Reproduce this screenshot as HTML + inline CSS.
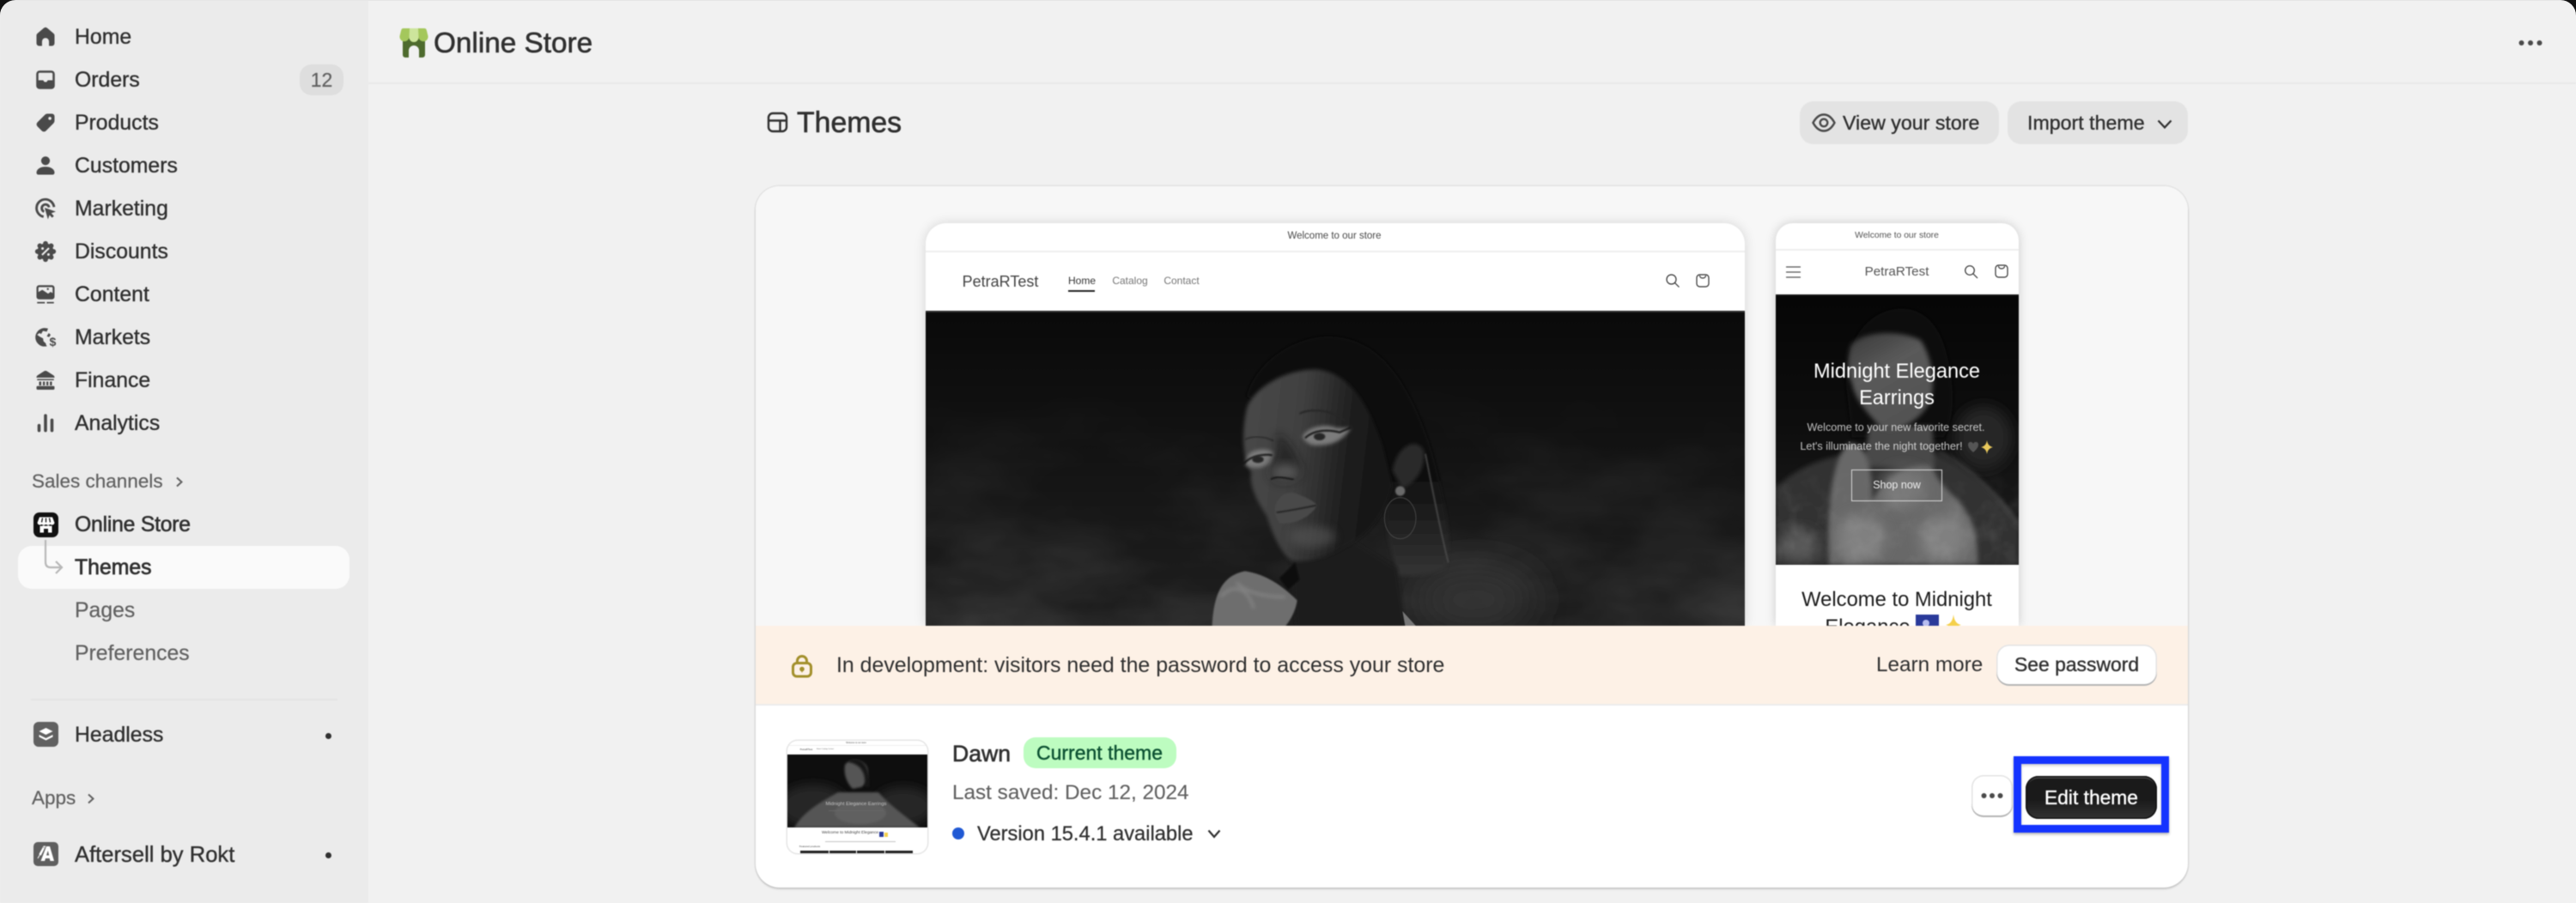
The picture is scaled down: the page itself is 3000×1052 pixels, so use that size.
<!DOCTYPE html>
<html><head><meta charset="utf-8"><title>Online Store - Themes</title>
<style>
html,body{margin:0;padding:0;width:3000px;height:1052px;overflow:hidden;background:#111}
*{box-sizing:border-box}
#root{position:absolute;left:0;top:0;width:3000px;height:1052px;background:#f1f1f1;border-radius:18px 18px 0 0;overflow:hidden;font-family:"Liberation Sans",sans-serif;color:#303030;border-top:1px solid #e6e6e6}
#in{position:absolute;left:0;top:-1px;width:3000px;height:1052px;filter:blur(.4px)}
.a{position:absolute}
.t{position:absolute;white-space:nowrap;line-height:40px;height:40px;margin-top:1px}
.n{font-size:24.8px;-webkit-text-stroke:.35px #303030;left:87px}
.g{color:#616161;-webkit-text-stroke:.2px #616161}
.m{-webkit-text-stroke:.6px currentColor}
svg{position:absolute;display:block;overflow:visible}
.ic{width:30px;height:30px;left:38px;fill:#4a4a4a}
.p{position:absolute;white-space:nowrap;line-height:1;text-align:center;transform:translateX(-50%)}
</style></head><body>
<div id="root"><div id="in">

<!-- sidebar -->
<div class="a" style="left:0;top:0;width:429px;height:1052px;background:#ebebeb"></div>

<svg class="ic" style="top:28px" viewBox="0 0 20 20"><path d="M3 8.8c0-.6.3-1.1.7-1.500L8.600 3.200a2.200 2.200 0 0 1 2.800 0l4.900 4.100c.4.4.7.900.7 1.500V15a2 2 0 0 1-2 2h-2.300v-3.500a2.700 2.700 0 0 0-5.400 0V17H5a2 2 0 0 1-2-2z"/></svg>
<svg class="ic" style="top:78px" viewBox="0 0 20 20"><path fill-rule="evenodd" d="M5.500 2.800h9A2.700 2.700 0 0 1 17.200 5.500v9a2.700 2.700 0 0 1-2.700 2.700h-9a2.700 2.700 0 0 1-2.700-2.700v-9A2.700 2.700 0 0 1 5.500 2.800zM4.500 5.500v4.800h3.300c.4 0 .6.200.8.500l.5.900h1.800l.5-.9c.2-.3.400-.5.800-.5h3.300V5.500a1 1 0 0 0-1-1h-9a1 1 0 0 0-1 1z"/></svg>
<svg class="ic" style="top:128px" viewBox="0 0 20 20"><path fill-rule="evenodd" d="M11.500 3h3.500A2 2 0 0 1 17 5v3.500a2.500 2.500 0 0 1-.7 1.800l-6 6a2.200 2.200 0 0 1-3.100 0l-3.500-3.500a2.200 2.200 0 0 1 0-3.100l6-6A2.500 2.500 0 0 1 11.500 3zM13.400 5.400a1.200 1.200 0 1 0 0 2.400 1.200 1.200 0 0 0 0-2.400z"/></svg>
<svg class="ic" style="top:178px" viewBox="0 0 20 20"><circle cx="10" cy="6.200" r="3.400"/><path d="M3 15.500c0-2.800 2.800-4.700 7-4.700s7 1.900 7 4.700c0 .9-.6 1.500-1.500 1.500h-11c-.9 0-1.500-.6-1.500-1.500z"/></svg>
<svg class="ic" style="top:228px" viewBox="0 0 20 20"><path d="M8.500 16.300A6.800 6.800 0 1 1 16.600 8.800" fill="none" stroke="#4a4a4a" stroke-width="1.900"/><path d="M8.900 12.400A2.900 2.900 0 1 1 12.800 9" fill="none" stroke="#4a4a4a" stroke-width="1.900"/><path d="M9.300 9.300l8.700 3-3.500 1.300 2 2.200-1.400 1.300-2-2.100-1.200 3.300z"/></svg>
<svg class="ic" style="top:278px" viewBox="0 0 20 20"><g><circle cx="10" cy="10" r="6.300"/><circle cx="10" cy="3.800" r="1.900"/><circle cx="10" cy="16.200" r="1.900"/><circle cx="3.800" cy="10" r="1.900"/><circle cx="16.200" cy="10" r="1.900"/><circle cx="5.600" cy="5.600" r="1.900"/><circle cx="14.400" cy="5.600" r="1.900"/><circle cx="5.600" cy="14.400" r="1.900"/><circle cx="14.400" cy="14.400" r="1.900"/></g><path d="M7.300 12.700l5.400-5.400" stroke="#ebebeb" stroke-width="1.400"/><circle cx="7.700" cy="7.700" r="1" fill="#ebebeb"/><circle cx="12.300" cy="12.300" r="1" fill="#ebebeb"/></svg>
<svg class="ic" style="top:328px" viewBox="0 0 20 20"><path fill-rule="evenodd" d="M5 2.800h10a2 2 0 0 1 2 2v7a2 2 0 0 1-2 2H5a2 2 0 0 1-2-2v-7a2 2 0 0 1 2-2zM4.500 5v3.200l3-1.800 4.500 3 2-1.400 1.500 1V5a.7.7 0 0 0-.7-.7H5.200A.7.7 0 0 0 4.500 5z"/><path d="M3.500 15.800h6v1.200h-6zM11 15.800h5.500v1.200H11z"/><circle cx="11.800" cy="5.800" r=".8"/></svg>
<svg class="ic" style="top:378px" viewBox="0 0 20 20"><path d="M9.700 2.800a7.200 7.200 0 0 0-1.500 14.300l3-.1c-.6-.7-.9-1.400-.9-2.200l-1.900-1.800-.3-2.200-2.800-1.500L3.500 8l1.800-1.300 1.300.7L8 5l3 .6L12 3.200a7 7 0 0 0-2.300-.4z"/><path d="M12.500 6.700l1.500 1.300-1.200 1.800-1.800-.6z"/><text x="13" y="16.800" font-family="Liberation Sans,sans-serif" font-size="9.400" font-weight="700" fill="#4a4a4a">$</text></svg>
<svg class="ic" style="top:428px" viewBox="0 0 20 20"><path d="M10 2.700c.5 0 .9.100 1.300.4l4.600 2.900c.7.400 1.100 1 1.100 1.800V8H3v-.2c0-.8.400-1.400 1.100-1.800l4.600-2.900c.4-.3.800-.4 1.300-.4z"/><path d="M3.500 9h13v1h-13zM5 11h1.700v3H5zM8 11h1.500v3H8zM10.700 11h1.500v3h-1.500zM13.400 11h1.600v3h-1.600z"/><rect x="3" y="14.500" width="14" height="2.800" rx=".8"/></svg>
<svg class="ic" style="top:478px" viewBox="0 0 20 20"><rect x="3.800" y="10.600" width="2.400" height="6.300" rx="1.200"/><rect x="8.800" y="2.900" width="2.400" height="14" rx="1.200"/><rect x="13.800" y="6.400" width="2.400" height="10.500" rx="1.200"/></svg>

<span class="t n" style="top:23px">Home</span>
<span class="t n" style="top:73px">Orders</span>
<span class="t n" style="top:123px">Products</span>
<span class="t n" style="top:173px">Customers</span>
<span class="t n" style="top:223px">Marketing</span>
<span class="t n" style="top:273px">Discounts</span>
<span class="t n" style="top:323px">Content</span>
<span class="t n" style="top:373px">Markets</span>
<span class="t n" style="top:423px">Finance</span>
<span class="t n" style="top:473px">Analytics</span>
<div class="a" style="left:349px;top:75px;width:51px;height:36px;background:#dedede;border-radius:14px"></div>
<span class="t g" style="left:349px;top:72px;width:51px;text-align:center;font-size:23px">12</span>

<span class="t g" style="left:37px;top:540px;font-size:22.500px">Sales channels</span>
<svg style="left:203px;top:554px;width:12px;height:15px" viewBox="0 0 12 15"><path d="M3 2.500l5.500 5-5.500 5" fill="none" stroke="#616161" stroke-width="2"/></svg>

<svg style="left:39px;top:597px;width:29px;height:29px" viewBox="0 0 29 29"><rect width="29" height="29" rx="7" fill="#111"/><path d="M7 5.500h15l2.500 6.500a3 3 0 0 1-5 1.700 3.500 3.500 0 0 1-5 0 3.500 3.500 0 0 1-5 0 3 3 0 0 1-5-1.700z" fill="#fff"/><path d="M7.500 15.500c1.500.6 2.800.4 4-.5 2 1 4 1 6 0 1.200.9 2.500 1.100 4 .5v8h-4.500v-4.500h-5v4.500H7.500z" fill="#fff"/><path d="M10.500 6.500l-1 5M14.500 6.500v5M18.500 6.500l1 5" stroke="#111" stroke-width="1.300"/></svg>
<span class="t n" style="top:591px;letter-spacing:-.25px;-webkit-text-stroke:.55px #303030">Online Store</span>

<div class="a" style="left:21px;top:636px;width:386px;height:50px;background:#fafafa;border-radius:16px"></div>
<svg style="left:48px;top:629px;width:28px;height:44px" viewBox="0 0 28 44"><path d="M5 0v26c0 4 2 6 6 6h12M17 25l7 7-7 7" fill="none" stroke="#b8b8b8" stroke-width="2.200"/></svg>
<span class="t n" style="top:641px;-webkit-text-stroke:.7px #303030">Themes</span>
<span class="t n g" style="top:691px;color:#616161">Pages</span>
<span class="t n g" style="top:741px;color:#616161">Preferences</span>
<div class="a" style="left:36px;top:814px;width:357px;height:2px;background:#e3e3e3"></div>

<svg style="left:39px;top:841px;width:29px;height:29px" viewBox="0 0 29 29"><rect width="29" height="29" rx="6" fill="#616161"/><path d="M14.500 7l8 4-8 4-8-4z" fill="#fff"/><path d="M6.500 15l8 4 8-4v2.500l-8 4-8-4z" fill="#fff"/></svg>
<span class="t n" style="top:836px">Headless</span>
<div class="a" style="left:379px;top:854px;width:7px;height:7px;border-radius:50%;background:#303030"></div>

<span class="t g" style="left:37px;top:909px;font-size:22.500px">Apps</span>
<svg style="left:100px;top:923px;width:12px;height:15px" viewBox="0 0 12 15"><path d="M3 2.500l5.500 5-5.500 5" fill="none" stroke="#616161" stroke-width="2"/></svg>

<svg style="left:39px;top:981px;width:29px;height:28px" viewBox="0 0 29 28"><rect width="29" height="28" rx="5" fill="#5f5f5f"/><path d="M15 5h4l5 17h-4.500l-.8-3H14l-.9 3H8.500zM15 15.500h3.200L16.800 10z" fill="#fff" fill-rule="evenodd"/><path d="M7 14l5-9h1.500l-5 10zM5 19l7-12" stroke="#fff" stroke-width="1"/></svg>
<span class="t n" style="top:975px;font-size:25.600px">Aftersell by Rokt</span>
<div class="a" style="left:379px;top:993px;width:7px;height:7px;border-radius:50%;background:#303030"></div>

<!-- top bar -->
<div class="a" style="left:429px;top:96px;width:2571px;height:2px;background:#e9e9e9"></div>
<svg style="left:465px;top:33px;width:34px;height:34px" viewBox="0 0 34 34"><path fill-rule="evenodd" d="M4 9h26v22a3 3 0 0 1-3 3h-4V26a6 6 0 0 0-12 0v8H7a3 3 0 0 1-3-3z" fill="#4e6b2e"/><path d="M4.500 0H29.500Q31.500 0 32 3L33.500 9a5.500 5.500 0 0 1-11 1.500a5.500 5.500 0 0 1-11 0a5.500 5.500 0 0 1-11-1.500L2 3Q2.500 0 4.500 0z" fill="#a4c75c"/><path d="M12 0H22L22.500 10.500a5.500 5.500 0 0 1-11 0z" fill="#cde59c"/></svg>
<span class="t m" style="left:505px;top:30px;font-size:33.300px">Online Store</span>
<svg style="left:2930px;top:44px;width:34px;height:12px" viewBox="0 0 34 12"><circle cx="6.500" cy="6" r="3" fill="#4a4a4a"/><circle cx="17" cy="6" r="3" fill="#4a4a4a"/><circle cx="27.500" cy="6" r="3" fill="#4a4a4a"/></svg>

<!-- page header -->
<svg style="left:893px;top:130px;width:25px;height:25px" viewBox="0 0 25 25"><rect x="2" y="2" width="21" height="21" rx="5" fill="none" stroke="#303030" stroke-width="2.400"/><path d="M2 10.500h21M15.500 10.500V23" fill="none" stroke="#303030" stroke-width="2.400"/></svg>
<span class="t m" style="left:928px;top:122px;font-size:33.800px">Themes</span>
<div class="a" style="left:2096px;top:118px;width:232px;height:50px;background:#e3e3e3;border-radius:16px"></div>
<svg style="left:2110px;top:131px;width:28px;height:24px" viewBox="0 0 28 24"><path d="M1.500 12C5 5.500 9 2.500 14 2.500S23 5.500 26.500 12C23 18.500 19 21.500 14 21.500S5 18.500 1.500 12z" fill="none" stroke="#4a4a4a" stroke-width="2.400"/><circle cx="14" cy="12" r="4.300" fill="none" stroke="#4a4a4a" stroke-width="2.400"/></svg>
<span class="t" style="left:2146px;top:122px;font-size:23.200px;-webkit-text-stroke:.35px #303030">View your store</span>
<div class="a" style="left:2338px;top:118px;width:210px;height:50px;background:#e3e3e3;border-radius:16px"></div>
<span class="t" style="left:2361px;top:122px;font-size:23.200px;-webkit-text-stroke:.35px #303030">Import theme</span>
<svg style="left:2512px;top:139px;width:18px;height:11px" viewBox="0 0 18 11"><path d="M1.500 1.500l7.500 8 7.500-8" fill="none" stroke="#303030" stroke-width="2.200"/></svg>

<!-- main card -->
<div class="a" style="left:880px;top:217px;width:1668px;height:817px;border-radius:28px;background:#fff;box-shadow:0 2px 2px rgba(0,0,0,.14),0 0 0 1.500px rgba(0,0,0,.06)"></div>
<div class="a" style="left:880px;top:217px;width:1668px;height:817px;border-radius:28px;overflow:hidden">
  <div class="a" style="left:0;top:0;width:1668px;height:512px;background:#f7f7f7"></div>
</div>

<!-- desktop preview -->
<div class="a" style="left:1078px;top:260px;width:954px;height:469px;background:#fff;border-radius:24px 24px 0 0;box-shadow:0 0 14px rgba(0,0,0,.14);overflow:hidden">
  <div class="a" style="left:0;top:32px;width:954px;height:2px;background:#eee"></div>
  <span class="p" style="left:476px;top:10px;font-size:11.500px;color:#4a4a4a">Welcome to our store</span>
  <span class="p" style="left:87px;top:59px;font-size:18px;color:#444">PetraRTest</span>
  <span class="p" style="left:182px;top:61px;font-size:12px;color:#333">Home</span>
  <div class="a" style="left:166px;top:78px;width:31px;height:1.500px;background:#222"></div>
  <span class="p" style="left:238px;top:61px;font-size:12px;color:#777">Catalog</span>
  <span class="p" style="left:298px;top:61px;font-size:12px;color:#777">Contact</span>
  <svg style="left:861px;top:58px;width:18px;height:18px" viewBox="0 0 18 18"><circle cx="7.500" cy="7.500" r="5.500" fill="none" stroke="#333" stroke-width="1.200"/><path d="M11.500 11.500l5 5" stroke="#333" stroke-width="1.200"/></svg>
  <svg style="left:896px;top:58px;width:18px;height:18px" viewBox="0 0 18 18"><rect x="2" y="2" width="14" height="14" rx="3.500" fill="none" stroke="#333" stroke-width="1.200"/><path d="M5.500 3c0 4 7 4 7 0" fill="none" stroke="#333" stroke-width="1.200"/></svg>
  <svg style="left:0;top:102px;width:954px;height:367px;overflow:hidden" viewBox="0 0 954 367" preserveAspectRatio="none">
    <defs>
      <linearGradient id="bg" x1="0" y1="0" x2="0" y2="1"><stop offset="0" stop-color="#0a0a0a"/><stop offset=".4" stop-color="#121212"/><stop offset="1" stop-color="#1f1f1f"/></linearGradient>
      <linearGradient id="fade" x1="0" y1="0" x2="0" y2="1"><stop offset=".2" stop-color="#000"/><stop offset="1" stop-color="#fff"/></linearGradient>
      <mask id="fm"><rect width="954" height="367" fill="url(#fade)"/></mask>
      <linearGradient id="face" x1="0" y1="0" x2="1" y2=".15"><stop offset="0" stop-color="#484848"/><stop offset=".4" stop-color="#414141"/><stop offset=".75" stop-color="#1e1e1e"/><stop offset="1" stop-color="#141414"/></linearGradient>
      <linearGradient id="hr" x1="0" y1="0" x2="0" y2="1"><stop offset="0" stop-color="#0b0b0b"/><stop offset=".6" stop-color="#111"/><stop offset="1" stop-color="#343434"/></linearGradient>
      <filter id="b1" x="-20%" y="-20%" width="140%" height="140%"><feGaussianBlur stdDeviation="2.500"/></filter>
      <filter id="b2" x="-20%" y="-20%" width="140%" height="140%"><feGaussianBlur stdDeviation="6"/></filter>
      <filter id="b6" x="-30%" y="-30%" width="160%" height="160%"><feGaussianBlur stdDeviation="16"/></filter>
      <filter id="b30" x="-50%" y="-50%" width="200%" height="200%"><feGaussianBlur stdDeviation="70"/></filter>
      <filter id="fog" x="0" y="0" width="100%" height="100%"><feTurbulence type="fractalNoise" baseFrequency=".006 .012" numOctaves="4" seed="7"/><feColorMatrix values="0 0 0 0 1  0 0 0 0 1  0 0 0 0 1  .55 0 0 0 -.18"/></filter>
    </defs>
    <rect width="954" height="367" fill="url(#bg)"/>
    <rect width="954" height="367" filter="url(#fog)" mask="url(#fm)" opacity=".42"/>
    <g transform="translate(262,0) scale(.33333)">
      <ellipse cx="1130" cy="1010" rx="210" ry="110" fill="#343434" filter="url(#b30)"/>
      <path d="M335 300C370 170 510 90 620 90C770 90 860 200 925 340C985 470 1010 590 1030 700C1050 790 1040 870 1030 900C980 925 920 930 865 925L830 800L800 500Z" fill="url(#hr)" filter="url(#b2)"/>
      <path d="M490 870L510 1105L890 1105L860 900L700 800Z" fill="#1c1c1c" filter="url(#b2)"/>
      <path d="M335 345C350 285 450 205 580 205C690 215 760 320 810 470L845 610C820 710 770 780 680 825C620 860 540 885 490 872C445 835 420 760 405 715C360 650 345 600 352 565C325 525 315 440 335 345Z" fill="url(#face)" filter="url(#b2)"/>
      <ellipse cx="565" cy="790" rx="80" ry="38" fill="#595959" filter="url(#b6)" opacity=".6"/>
      <path d="M530 440C550 400 620 395 650 410L700 410C680 440 650 470 590 470C560 475 540 460 530 440Z" fill="#7c7c7c" filter="url(#b2)"/>
      <path d="M340 505C360 480 410 480 430 495L420 530C400 550 360 555 330 540Z" fill="#7c7c7c" filter="url(#b2)"/>
      <path d="M540 445C570 415 620 415 660 425L700 408" fill="none" stroke="#111" stroke-width="6" filter="url(#b1)"/>
      <ellipse cx="590" cy="440" rx="20" ry="13" fill="#262626" filter="url(#b1)"/>
      <path d="M325 535C350 505 400 500 425 505" fill="none" stroke="#111" stroke-width="6" filter="url(#b1)"/>
      <ellipse cx="375" cy="520" rx="20" ry="12" fill="#262626" filter="url(#b1)"/>
      <path d="M520 360C560 340 630 345 680 385" fill="none" stroke="#262626" stroke-width="6" filter="url(#b1)"/>
      <path d="M330 450C360 435 400 440 430 455" fill="none" stroke="#2c2c2c" stroke-width="5" filter="url(#b1)"/>
      <path d="M440 455C445 500 430 530 410 560C415 590 440 610 480 600C510 600 530 580 530 560C520 510 470 430 440 430Z" fill="#161616" opacity=".6" filter="url(#b6)"/>
      <ellipse cx="470" cy="565" rx="50" ry="30" fill="#545454" filter="url(#b6)"/>
      <path d="M420 590C440 575 470 585 500 590" fill="none" stroke="#141414" stroke-width="6" filter="url(#b1)"/>
      <path d="M435 690C440 650 480 625 510 640C540 650 570 665 582 680C560 720 500 750 450 742C440 725 432 710 435 690Z" fill="#4a4a4a" filter="url(#b1)"/>
      <path d="M440 705C480 700 530 690 580 680" fill="none" stroke="#171717" stroke-width="4" filter="url(#b1)"/>
      <path d="M845 560C860 470 930 440 955 490C960 550 930 600 880 620Z" fill="#2c2c2c" filter="url(#b2)"/>
      <circle cx="872" cy="630" r="17" fill="#6a6a6a" filter="url(#b1)"/>
      <ellipse cx="872" cy="725" rx="55" ry="72" fill="none" stroke="#4c4c4c" stroke-width="2.500"/>
      <path d="M215 1105C220 990 250 925 330 910C400 920 460 960 512 1012C505 1060 480 1090 470 1105Z" fill="#6e6e6e" filter="url(#b1)"/>
      <path d="M245 1000C290 950 340 970 360 1040M300 950C340 990 410 1000 470 1000" fill="none" stroke="#8f8f8f" stroke-width="6" filter="url(#b2)"/>
      <path d="M450 935L505 880L520 940L480 975Z" fill="#0c0c0c" filter="url(#b1)"/>
      <path d="M880 1050L930 1105L890 1105Z" fill="#777"/>
      <path d="M960 500C980 600 1010 760 1040 880" fill="none" stroke="#4c4c4c" stroke-width="5" filter="url(#b1)"/>
    </g>
    <rect x="0" y="0" width="954" height="2" fill="#2f2f2f"/>
  </svg>
</div>

<!-- mobile preview -->
<div class="a" style="left:2068px;top:260px;width:283px;height:469px;background:#fff;border-radius:20px 20px 0 0;box-shadow:0 0 12px rgba(0,0,0,.18);overflow:hidden">
  <div class="a" style="left:0;top:30px;width:283px;height:2px;background:#eee"></div>
  <span class="p" style="left:141px;top:10px;font-size:10.300px;color:#555">Welcome to our store</span>
  <svg style="left:12px;top:50px;width:17px;height:14px" viewBox="0 0 17 14"><path d="M0 1h17M0 7h17M0 13h17" stroke="#555" stroke-width="1.300"/></svg>
  <span class="p" style="left:141px;top:49px;font-size:15.200px;color:#555">PetraRTest</span>
  <svg style="left:219px;top:48px;width:17px;height:17px" viewBox="0 0 17 17"><circle cx="7" cy="7" r="5.300" fill="none" stroke="#333" stroke-width="1.200"/><path d="M11 11l5 5" stroke="#333" stroke-width="1.200"/></svg>
  <svg style="left:255px;top:48px;width:16px;height:16px" viewBox="0 0 16 16"><rect x="1" y="1" width="14" height="14" rx="3.500" fill="none" stroke="#333" stroke-width="1.200"/><path d="M4.500 2c0 4 7 4 7 0" fill="none" stroke="#333" stroke-width="1.200"/></svg>
  <svg style="left:0;top:83px;width:283px;height:315px;overflow:hidden" viewBox="53 280 850 945" preserveAspectRatio="none">
    <defs>
      <linearGradient id="mf" x1="0" y1="0" x2=".5" y2="1"><stop offset="0" stop-color="#383838"/><stop offset=".45" stop-color="#5a5a5a"/><stop offset="1" stop-color="#525252"/></linearGradient>
      <linearGradient id="mb" x1="0" y1="0" x2="0" y2="1"><stop offset="0" stop-color="#060606"/><stop offset=".5" stop-color="#0e0e0e"/><stop offset="1" stop-color="#202020"/></linearGradient>
      <filter id="m3" x="-20%" y="-20%" width="140%" height="140%"><feGaussianBlur stdDeviation="8"/></filter>
      <filter id="m9" x="-40%" y="-40%" width="180%" height="180%"><feGaussianBlur stdDeviation="24"/></filter>
      <filter id="mn" x="0" y="0" width="100%" height="100%"><feTurbulence type="fractalNoise" baseFrequency=".014" numOctaves="3" seed="4"/><feColorMatrix values="0 0 0 0 1  0 0 0 0 1  0 0 0 0 1  1.300 0 0 0 -.55"/></filter>
      <linearGradient id="mfd" x1="0" y1="0" x2="0" y2="1"><stop offset=".6" stop-color="#000"/><stop offset=".8" stop-color="#fff"/></linearGradient>
      <mask id="mm"><rect x="53" y="280" width="850" height="945" fill="url(#mfd)"/></mask>
    </defs>
    <rect x="53" y="280" width="850" height="945" fill="url(#mb)"/>
    <ellipse cx="780" cy="780" rx="100" ry="110" fill="#262626" filter="url(#m9)"/>
    <path d="M300 600C290 430 390 325 500 330C610 335 650 450 665 560C680 660 670 730 640 780L320 780Z" fill="#101010" filter="url(#m3)"/>
    <path d="M53 960C120 880 250 840 340 835L600 835C700 860 850 1000 903 1080V1224H53Z" fill="#333" filter="url(#m3)"/>
    <path d="M380 740L600 740L610 880H360Z" fill="#484848" filter="url(#m3)"/>
    <path d="M315 460C345 410 480 400 560 440C600 500 615 600 590 660C550 730 470 770 420 745C380 700 330 650 320 590C300 560 305 500 315 460Z" fill="url(#mf)" filter="url(#m3)"/>
    <path d="M240 1224C230 1040 250 840 310 800C380 800 390 900 390 1000C460 890 560 860 600 880C640 1000 760 980 760 1224Z" fill="#686868" filter="url(#m3)"/>
    <ellipse cx="350" cy="1130" rx="85" ry="80" fill="#808080" filter="url(#m9)"/>
    <ellipse cx="640" cy="1130" rx="85" ry="80" fill="#808080" filter="url(#m9)"/>
    <ellipse cx="500" cy="960" rx="75" ry="70" fill="#787878" filter="url(#m9)"/>
    <ellipse cx="130" cy="1160" rx="70" ry="55" fill="#5a5a5a" filter="url(#m9)"/>
    <rect x="53" y="280" width="850" height="945" filter="url(#mn)" mask="url(#mm)" opacity=".14"/>
    <path d="M620 830C720 870 840 990 900 1080" fill="none" stroke="#6a6a6a" stroke-width="5" filter="url(#m3)"/>
    <rect x="53" y="280" width="850" height="5" fill="#1a1a1a"/>
  </svg>
  <span class="p" style="left:141px;top:161px;font-size:23.600px;color:#fff;line-height:24px">Midnight Elegance</span>
  <span class="p" style="left:141px;top:192px;font-size:23.600px;color:#fff;line-height:24px">Earrings</span>
  <span class="p" style="left:140px;top:232px;font-size:12.600px;color:rgba(255,255,255,.72)">Welcome to your new favorite secret.</span>
  <span class="p" style="left:123px;top:254px;font-size:12.700px;color:rgba(255,255,255,.72)">Let's illuminate the night together!</span>
  <svg style="left:220px;top:252px;width:46px;height:20px" viewBox="0 0 46 20"><path d="M4 6c0-4 5-4 6-1 1-3 6-3 6 1 0 4-4 7-6 9-2-2-6-5-6-9z" fill="#555"/><path d="M26 1c.8 5 3.200 7 7 8-3.800 1-6.200 3-7 8-.8-5-3.200-7-7-8 3.800-1 6.200-3 7-8z" fill="#e8c85c"/></svg>
  <div class="a" style="left:88px;top:287px;width:106px;height:37px;border:1.500px solid #d8d8d8"></div>
  <span class="p" style="left:141px;top:299px;font-size:12.500px;color:#eee">Shop now</span>
  <span class="p" style="left:141px;top:427px;font-size:23.800px;color:#1d1d1d;line-height:24px">Welcome to Midnight</span>
  <span class="p" style="left:107px;top:459px;font-size:23.800px;color:#1d1d1d;line-height:24px">Elegance</span>
  <svg style="left:163px;top:456px;width:56px;height:28px" viewBox="0 0 56 28"><rect x="0" y="0" width="27" height="28" fill="#2a3a9a"/><circle cx="12" cy="10" r="4" fill="#b7bdf0"/><path d="M44 0c1 8 4 11 9 12-5 1-8 4-9 16-1-12-4-15-9-16 5-1 8-4 9-12z" fill="#f5d04a"/></svg>
</div>

<!-- banner -->
<div class="a" style="left:880px;top:729px;width:1668px;height:93px;background:#fdf1e6;border-bottom:2px solid #ececec"></div>
<svg style="left:921px;top:763px;width:26px;height:27px" viewBox="0 0 26 27"><rect x="2.500" y="9.500" width="21" height="15.500" rx="4.500" fill="none" stroke="#a3902c" stroke-width="3"/><path d="M7.500 10V7a5.500 5.500 0 0 1 11 0v3" fill="none" stroke="#a3902c" stroke-width="3"/><circle cx="13" cy="16.500" r="2.800" fill="#a3902c"/><path d="M11.500 17h3l-1.500 4z" fill="#a3902c"/></svg>
<span class="t" style="left:974px;top:754px;font-size:24.900px">In development: visitors need the password to access your store</span>
<span class="t" style="left:2185px;top:754px;font-size:24.300px">Learn more</span>
<div class="a" style="left:2325px;top:751px;width:187px;height:48px;background:#fff;border-radius:15px;box-shadow:inset 0 -2px 0 #b5b5b5,inset 0 0 0 1.500px #e3e3e3"></div>
<span class="t" style="left:2346px;top:753px;font-size:22.900px;-webkit-text-stroke:.35px #303030">See password</span>

<!-- theme row -->
<div class="a" style="left:917px;top:863px;width:163px;height:131px;background:#fff;border-radius:12px;box-shadow:0 0 0 1.500px #e5e5e5;overflow:hidden">
  <div class="a" style="left:0;top:16px;width:163px;height:85px;background:#0e0e0e"></div>
  <svg style="left:0;top:16px;width:163px;height:85px;overflow:hidden" viewBox="0 0 163 85">
    <defs><filter id="th" x="-20%" y="-20%" width="140%" height="140%"><feGaussianBlur stdDeviation="1.200"/></filter><filter id="th2" x="-40%" y="-40%" width="180%" height="180%"><feGaussianBlur stdDeviation="6"/></filter></defs>
    <ellipse cx="30" cy="60" rx="40" ry="25" fill="#262626" filter="url(#th2)"/>
    <ellipse cx="135" cy="60" rx="35" ry="22" fill="#282828" filter="url(#th2)"/>
    <path d="M8 85C20 65 40 55 59 44L106 44C118 58 135 70 154 85Z" fill="#555" filter="url(#th)"/>
    <path d="M67 12C72 5 88 4 93 15C96 28 90 36 86 38L76 40C70 34 65 24 67 12Z" fill="#555" filter="url(#th)"/>
    <path d="M72 6C88 2 96 14 96 38L90 38C92 22 86 12 72 9Z" fill="#141414" filter="url(#th)"/>
    <ellipse cx="85" cy="68" rx="30" ry="13" fill="#606060" filter="url(#th)"/>
  </svg>
  <span class="p" style="left:80px;top:2px;font-size:2.500px;color:#555">Welcome to our store</span>
  <div class="a" style="left:0;top:5px;width:163px;height:1px;background:#eee"></div>
  <span class="p" style="left:22px;top:8.500px;font-size:3px;color:#444">PetraRTest</span>
  <span class="p" style="left:44px;top:9px;font-size:2px;color:#666">Home Catalog Contact</span>
  <span class="p" style="left:80px;top:72px;font-size:5.800px;color:#c4c4c4">Midnight Elegance Earrings</span>
  <div class="a" style="left:48px;top:81px;width:64px;height:1px;background:#666"></div>
  <span class="p" style="left:73px;top:105.500px;font-size:4.800px;color:#444">Welcome to Midnight Elegance</span>
  <div class="a" style="left:107px;top:106px;width:5px;height:6px;background:#2a3a9a"></div>
  <div class="a" style="left:113px;top:107px;width:4px;height:5px;background:#f5d04a"></div>
  <div class="a" style="left:44px;top:117px;width:82px;height:1px;background:#c4c4c4"></div>
  <span class="p" style="left:26px;top:122px;font-size:3px;color:#444">Featured products</span>
  <div class="a" style="left:15px;top:128px;width:33px;height:3px;background:#222"></div>
  <div class="a" style="left:49px;top:128px;width:31px;height:3px;background:#222"></div>
  <div class="a" style="left:81px;top:128px;width:32px;height:3px;background:#222"></div>
  <div class="a" style="left:114px;top:128px;width:32px;height:3px;background:#222"></div>
</div>

<span class="t" style="left:1109px;top:857px;font-size:26.600px;-webkit-text-stroke:.6px #303030">Dawn</span>
<div class="a" style="left:1192px;top:859px;width:178px;height:36px;background:#bdfcc0;border-radius:14px"></div>
<span class="t" style="left:1207px;top:856px;font-size:23px;color:#0c5132;-webkit-text-stroke:.4px #0c5132">Current theme</span>
<span class="t" style="left:1109px;top:903px;font-size:24.300px;color:#616161;-webkit-text-stroke:.1px #616161">Last saved: Dec 12, 2024</span>
<div class="a" style="left:1109px;top:964px;width:14px;height:14px;border-radius:50%;background:#2059d4"></div>
<span class="t" style="left:1138px;top:951px;font-size:23.700px;-webkit-text-stroke:.25px #303030">Version 15.4.1 available</span>
<svg style="left:1406px;top:966px;width:16px;height:11px" viewBox="0 0 16 11"><path d="M1.500 1.500l6.500 7.500 6.500-7.500" fill="none" stroke="#303030" stroke-width="2.200"/></svg>

<div class="a" style="left:2296px;top:903px;width:48px;height:49px;background:#fff;border-radius:14px;box-shadow:inset 0 -2px 0 #b5b5b5,inset 0 0 0 1.500px #e3e3e3"></div>
<svg style="left:2305px;top:921px;width:30px;height:12px" viewBox="0 0 30 12"><circle cx="5.500" cy="6" r="3" fill="#4a4a4a"/><circle cx="15" cy="6" r="3" fill="#4a4a4a"/><circle cx="24.500" cy="6" r="3" fill="#4a4a4a"/></svg>

<div class="a" style="left:2345px;top:881px;width:181px;height:89px;border:9px solid #1433ff;box-shadow:0 2px 3px rgba(0,0,0,.3),inset 0 2px 3px rgba(0,0,0,.2)"></div>
<div class="a" style="left:2359px;top:904px;width:153px;height:50px;border-radius:15px;background:linear-gradient(#1a1a1a 0,#1a1a1a 55%,#333 100%);box-shadow:inset 0 0 0 1.500px #111,inset 0 3px 0 #444"></div>
<span class="t" style="left:2381px;top:908px;font-size:22.800px;color:#fff;-webkit-text-stroke:.35px #fff">Edit theme</span>

</div></div>
</body></html>
